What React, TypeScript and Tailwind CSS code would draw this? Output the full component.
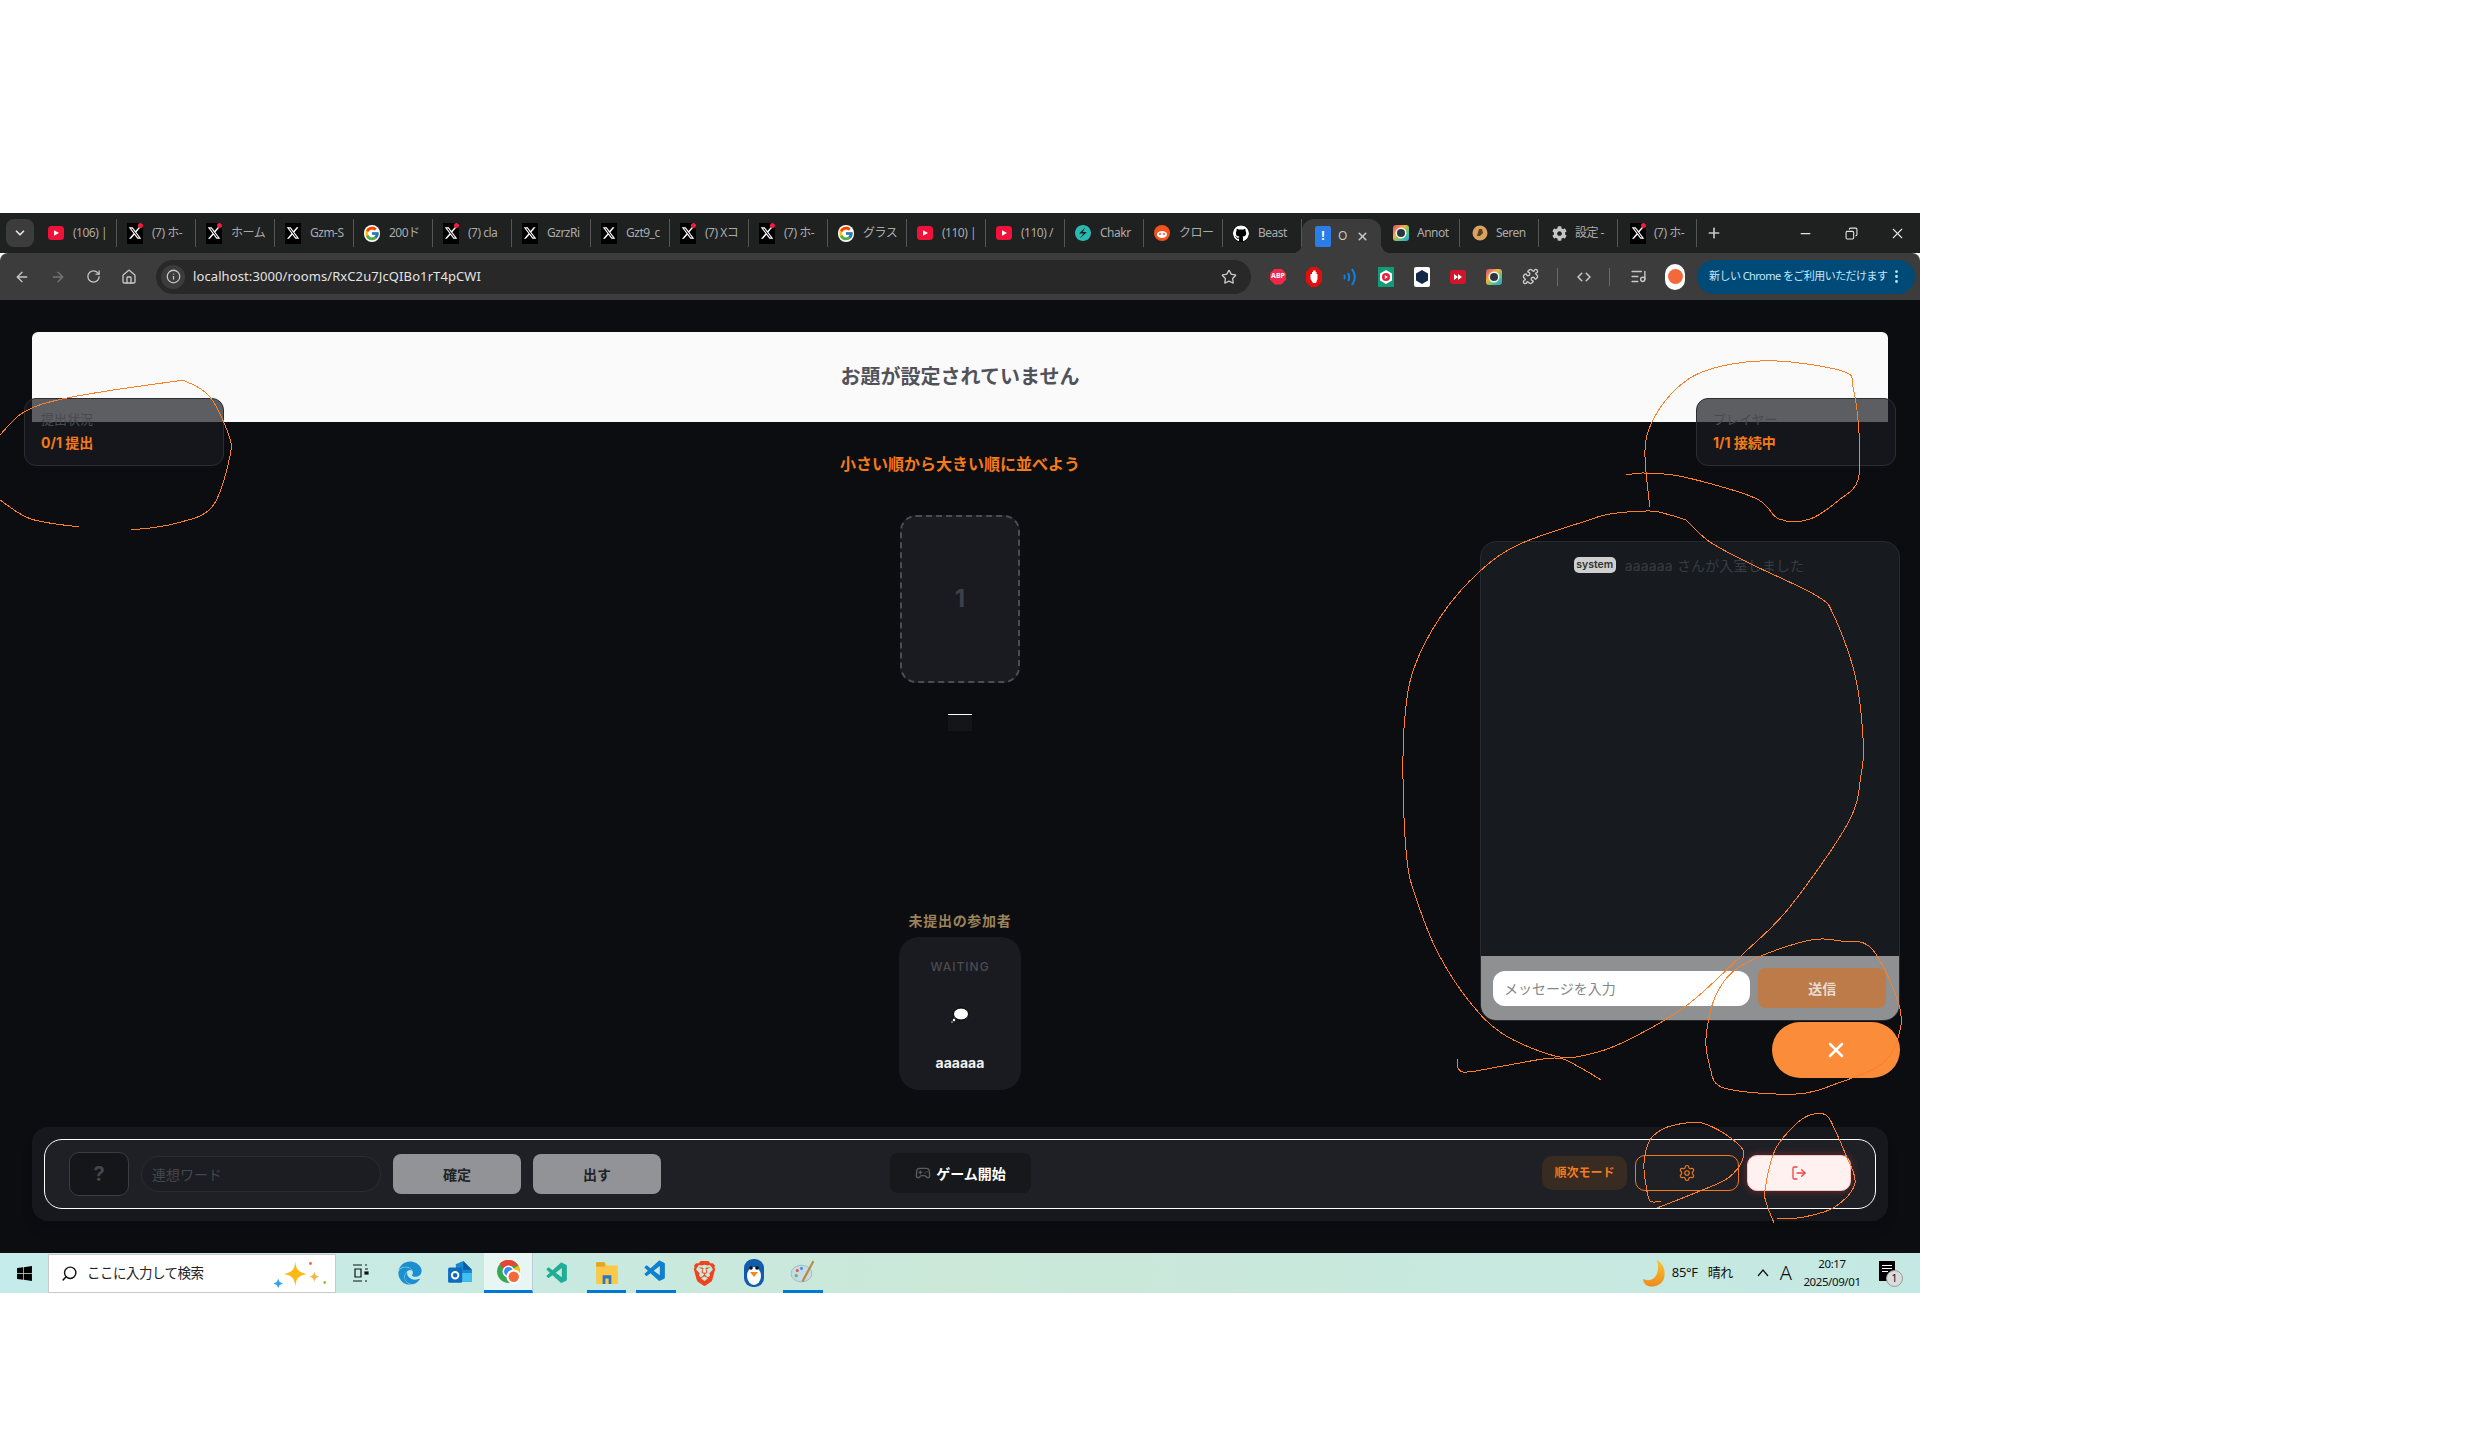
import { ArrowLeft, ArrowRight, ChevronDown, ChevronsLeftRight, Copy, EllipsisVertical, Gamepad2, Home, Info, ListMusic, LogOut, Minus, Plus, Puzzle, RotateCw, Search, Settings, Star, X } from "lucide-react"
import { FaCog, FaEdge, FaGithub, FaWindows } from "react-icons/fa"
import { FaXTwitter } from "react-icons/fa6"
import { FcGoogle } from "react-icons/fc"
import { SiBrave, SiChakraui } from "react-icons/si"
import { VscVscode } from "react-icons/vsc"

const uiFont = "font-['Noto_Sans','Noto_Sans_CJK_JP',sans-serif]"

type Pt = [number, number]

// freehand marks drawn over the screenshot
const strokes: Pt[][] = [
  [[0, 500], [31, 519], [79, 527]],
  [[131, 530], [173, 524], [212, 507], [230, 456], [228, 433], [210, 397], [187, 382], [170, 382], [67, 398], [24, 412], [0, 435]],
  [[1626, 475], [1644, 473], [1684, 477], [1755, 498], [1779, 519], [1810, 519], [1839, 500], [1858, 480], [1859, 433], [1853, 387], [1845, 372], [1791, 362], [1746, 362], [1702, 372], [1675, 390], [1653, 420], [1645, 450], [1649, 500], [1650, 507]],
  [[1686, 520], [1670, 515], [1650, 511], [1610, 514], [1589, 520], [1520, 544], [1479, 572], [1441, 616], [1414, 668], [1405, 716], [1403, 779], [1407, 860], [1417, 901], [1438, 953], [1469, 1001], [1503, 1034], [1555, 1056], [1586, 1055], [1624, 1042], [1686, 1006], [1744, 953], [1789, 908], [1848, 823], [1861, 775], [1863, 738], [1855, 675], [1834, 616], [1817, 596], [1751, 564], [1710, 542], [1686, 520]],
  [[1457, 1059], [1463, 1072], [1503, 1066], [1555, 1058], [1579, 1067], [1601, 1080]],
  [[1710, 1068], [1706, 1038], [1717, 993], [1744, 964], [1806, 941], [1841, 941], [1872, 949], [1899, 1005], [1898, 1038], [1882, 1064], [1841, 1082], [1796, 1094], [1724, 1088], [1710, 1068]],
  [[1661, 1201], [1650, 1201], [1646, 1185], [1644, 1163], [1650, 1140], [1665, 1128], [1686, 1123], [1702, 1123], [1725, 1134], [1743, 1150], [1740, 1165], [1725, 1180], [1690, 1195], [1657, 1208]],
  [[1774, 1223], [1767, 1205], [1765, 1190], [1775, 1150], [1795, 1125], [1810, 1115], [1826, 1115], [1835, 1130], [1845, 1153], [1855, 1183], [1835, 1207], [1804, 1217], [1777, 1219]],
]

function toPath(p: Pt[]) {
  let d = `M${p[0][0]} ${p[0][1]}`
  for (let i = 0; i < p.length - 1; i++) {
    const a = p[Math.max(i - 1, 0)]
    const b = p[i]
    const c = p[i + 1]
    const e = p[Math.min(i + 2, p.length - 1)]
    d += ` C${b[0] + (c[0] - a[0]) / 6} ${b[1] + (c[1] - a[1]) / 6} ${c[0] - (e[0] - b[0]) / 6} ${c[1] - (e[1] - b[1]) / 6} ${c[0]} ${c[1]}`
  }
  return d
}

function Youtube() {
  return (
    <svg viewBox="0 0 16 16" className="size-4">
      <rect x="0" y="1" width="16" height="14" rx="3.5" fill="#f0123a" />
      <path d="M6 5.2 11 8l-5 2.8z" fill="#fff" />
    </svg>
  )
}

function XIcon({ dot = true }: { dot?: boolean }) {
  return (
    <span className="relative flex h-[21px] w-[16px] items-center justify-center bg-black text-white">
      <FaXTwitter size={14} />
      {dot && <span className="absolute right-0 top-0 size-[5px] rounded-full bg-[#f01e3c]" />}
    </span>
  )
}

function Ring() {
  return (
    <svg viewBox="0 0 16 16" className="size-4">
      <defs>
        <linearGradient id="ring" x1="0" y1="0" x2="1" y2="1">
          <stop offset="0" stopColor="#e0407f" />
          <stop offset=".4" stopColor="#f2b33d" />
          <stop offset=".7" stopColor="#47c78a" />
          <stop offset="1" stopColor="#3b8ff0" />
        </linearGradient>
      </defs>
      <rect width="16" height="16" rx="3" fill="url(#ring)" />
      <circle cx="8" cy="8" r="5.5" fill="#f4f4f4" />
      <circle cx="8" cy="8" r="4" fill="#2c3440" />
    </svg>
  )
}

const tabs: { icon: React.ReactNode; label: string }[] = [
  { icon: <Youtube />, label: "(106) |" },
  { icon: <XIcon />, label: "(7) ホ-" },
  { icon: <XIcon />, label: "ホーム" },
  { icon: <XIcon dot={false} />, label: "Gzm-S" },
  { icon: <FcGoogle size={17} className="rounded-full bg-white" />, label: "200ド" },
  { icon: <XIcon />, label: "(7) cla" },
  { icon: <XIcon dot={false} />, label: "GzrzRi" },
  { icon: <XIcon dot={false} />, label: "Gzt9_c" },
  { icon: <XIcon />, label: "(7) Xコ" },
  { icon: <XIcon />, label: "(7) ホ-" },
  { icon: <FcGoogle size={17} className="rounded-full bg-white" />, label: "グラス" },
  { icon: <Youtube />, label: "(110) |" },
  { icon: <Youtube />, label: "(110) /" },
  { icon: <SiChakraui size={16} className="text-[#2bb8b0]" />, label: "Chakr" },
  {
    icon: (
      <svg viewBox="0 0 16 16" className="size-[18px]">
        <circle cx="8" cy="8" r="8" fill="#f4511e" />
        <ellipse cx="8" cy="9.5" rx="5" ry="3.4" fill="#fff" />
        <circle cx="6" cy="9" r="1" fill="#f4511e" />
        <circle cx="10" cy="9" r="1" fill="#f4511e" />
      </svg>
    ),
    label: "クロー",
  },
  { icon: <FaGithub size={17} className="rounded-full bg-black text-white" />, label: "Beast" },
]

const tabsAfter: { icon: React.ReactNode; label: string }[] = [
  { icon: <Ring />, label: "Annot" },
  {
    icon: (
      <svg viewBox="0 0 16 16" className="size-4">
        <circle cx="8" cy="8" r="7.5" fill="#d8a25f" />
        <path d="M5 11 7 4h3l1 4-3 3z" fill="#5e3f1f" />
      </svg>
    ),
    label: "Seren",
  },
  { icon: <FaCog size={15} className="text-[#c4c7c5]" />, label: "設定 -" },
  { icon: <XIcon />, label: "(7) ホ-" },
]

function Tab({ icon, label, after }: { icon: React.ReactNode; label: string; after?: boolean }) {
  return (
    <div className={after ? "flex h-[28px] w-[79px] shrink-0 items-center border-r border-[#555] pl-[12px]" : "flex h-[28px] w-[79px] shrink-0 items-center border-r border-[#555] pl-[10px]"}>
      <span className="flex w-[16px] shrink-0 justify-center">{icon}</span>
      <span className={after ? "ml-[8px] w-[41px] whitespace-nowrap text-[12px] tracking-[-0.5px] text-[#b9bbbb] opacity-90" : "ml-[9px] w-[41px] whitespace-nowrap text-[12px] tracking-[-0.5px] text-[#b9bbbb] opacity-90"}>{label}</span>
    </div>
  )
}

function TabStrip() {
  return (
    <div className="flex h-[40px] items-center bg-[#1f2121] pl-[6px]">
      <span className="flex h-[28px] w-[28px] items-center justify-center rounded-lg bg-[#3c3c3c] text-[#e3e3e3]">
        <ChevronDown size={14} strokeWidth={3} />
      </span>
      <div className="ml-[4px] flex items-center">
        {tabs.map((t, i) => <Tab key={i} {...t} />)}
      </div>
      <div className="relative flex h-[34px] w-[79px] shrink-0 items-center self-end rounded-t-xl bg-[#3c3c3c] pl-[13px]">
        <span className="absolute -left-[10px] bottom-0 size-[10px] bg-[radial-gradient(circle_at_0_0,transparent_10px,#3c3c3c_10.5px)]" />
        <span className="absolute -right-[10px] bottom-0 size-[10px] bg-[radial-gradient(circle_at_100%_0,transparent_10px,#3c3c3c_10.5px)]" />
        <span className="flex h-[21px] w-[16px] items-center justify-center rounded-[2px] bg-[#2b7de9] text-[12px] font-bold text-white">!</span>
        <span className="ml-[7px] text-[12px] text-[#c4c7c5]">O</span>
        <X size={13} strokeWidth={3} className="ml-[9px] text-[#c4c7c5]" />
      </div>
      <div className="flex items-center">
        {tabsAfter.map((t, i) => <Tab key={i} after {...t} />)}
      </div>
      <Plus size={16} strokeWidth={2.5} className="ml-[9px] text-[#c4c7c5]" />
      <div className="ml-auto flex w-[130px] items-center justify-between pl-[8px] pr-[14px] text-[#e3e3e3]">
        <Minus size={15} />
        <Copy size={13} className="-scale-x-100" />
        <X size={17} strokeWidth={1.5} />
      </div>
    </div>
  )
}

function Ext({ children }: { children: React.ReactNode }) {
  return <span className="flex w-[36px] shrink-0 justify-center">{children}</span>
}

function Toolbar() {
  return (
    <div className="flex h-[47px] items-center rounded-t-lg bg-[#3c3c3c] text-[#c7c7c7]">
      <div className="flex w-[156px] shrink-0 items-center gap-[20px] pl-[14px]">
        <ArrowLeft size={16} />
        <ArrowRight size={16} className="text-[#757575]" />
        <RotateCw size={15} />
        <Home size={16} />
      </div>
      <div className="flex h-[34px] w-[1095px] shrink-0 items-center rounded-full bg-[#282828] pl-[5px] pr-[14px]">
        <span className="flex size-[24px] items-center justify-center rounded-full bg-[#3c3c3c]">
          <Info size={15} />
        </span>
        <span className="ml-[8px] text-[13px] tracking-[0.1px] text-[#e3e3e3]">localhost:3000/rooms/RxC2u7JcQIBo1rT4pCWI</span>
        <Star size={16} className="ml-auto" />
      </div>
      <div className="ml-[9px] flex items-center">
        <Ext>
          <span className="flex size-[16px] items-center justify-center bg-[#f0284a] text-[7px] font-bold text-white [clip-path:polygon(30%_0,70%_0,100%_30%,100%_70%,70%_100%,30%_100%,0_70%,0_30%)]">ABP</span>
        </Ext>
        <Ext>
          <svg viewBox="0 0 16 20" className="h-[20px] w-[16px]">
            <path d="M5 0h6l5 5v10l-5 5H5l-5-5V5z" fill="#e30d0d" />
            <path d="M4.500 7v5l2.500 4h3l1.500-4V7h-1V5h-1V3.500H7V5H6v2z" fill="#fff" />
          </svg>
        </Ext>
        <Ext>
          <svg viewBox="0 0 16 20" className="h-[20px] w-[16px]" fill="none" stroke="#0a84e8" strokeWidth="2">
            <path d="M2 8c1 1 1 3 0 4M6 6c1.500 2 1.500 6 0 8M10 2c3.500 5 3.500 11 0 16" />
          </svg>
        </Ext>
        <Ext>
          <svg viewBox="0 0 16 20" className="h-[20px] w-[16px]">
            <rect width="16" height="20" fill="#0f9d78" />
            <path d="M8 3l6 3.500v7L8 17l-6-3.500v-7z" fill="#fff" />
            <circle cx="8" cy="10" r="4" fill="#e5213c" />
            <path d="M6.800 8 10 10l-3.200 2z" fill="#fff" />
          </svg>
        </Ext>
        <Ext>
          <svg viewBox="0 0 16 20" className="h-[20px] w-[16px]">
            <rect width="16" height="20" rx="2" fill="#fff" />
            <path d="M8 3l6 3.500v7L8 17l-6-3.500v-7z" fill="#12294a" />
          </svg>
        </Ext>
        <Ext>
          <svg viewBox="0 0 16 16" className="size-4">
            <rect y="1" width="16" height="14" rx="3" fill="#d2152c" />
            <path d="M4 5l4 3-4 3zM8 5l4 3-4 3z" fill="#fff" />
          </svg>
        </Ext>
        <Ext><Ring /></Ext>
        <Ext><Puzzle size={17} /></Ext>
        <span className="ml-[9px] h-[18px] w-px bg-[#6a6a6a]" />
        <span className="ml-[17px] w-[18px]"><ChevronsLeftRight size={18} /></span>
        <span className="ml-[16px] h-[18px] w-px bg-[#6a6a6a]" />
        <span className="ml-[20px]"><ListMusic size={17} /></span>
        <span className="ml-[18px] flex h-[26px] w-[20px] items-center justify-center rounded-full bg-white">
          <span className="size-[15px] rounded-full bg-[#f4693c]" />
        </span>
        <div className="ml-[12px] flex h-[34px] w-[218px] items-center rounded-full bg-[#004a77] pl-[12px] pr-[10px] text-[#c2e7ff]">
          <span className="whitespace-nowrap text-[11px] tracking-[-0.55px]">新しい Chrome をご利用いただけます</span>
          <EllipsisVertical size={17} className="ml-auto shrink-0" />
        </div>
      </div>
    </div>
  )
}

function StatCard({ label, value }: { label: string; value: string }) {
  return (
    <div className="flex h-[68px] w-[200px] flex-col rounded-xl border border-[#2a2d32] bg-[#181b20]/70 pl-[16px] pt-[12px]">
      <span className="text-[13px] leading-[16px] text-[#484a4e]">{label}</span>
      <span className="mt-[6px] text-[14px] font-bold leading-[20px] text-[#f47a1a]">{value}</span>
    </div>
  )
}

function ChatPanel() {
  return (
    <div className="flex h-[480px] flex-col overflow-hidden rounded-2xl border border-[#26292e] bg-[#171a1f]">
      <div className="flex flex-1 justify-center pt-[15px]">
        <div className="-ml-[2px] flex h-[16px] items-center">
          <span className="flex h-[16px] w-[42px] items-center justify-center rounded-[5px] bg-[#cfcfcf] text-[10.500px] font-semibold text-[#333]">system</span>
          <span className="ml-[9px] text-[14px] tracking-[0.15px] text-[#3a3c41]">aaaaaa さんが入室しました</span>
        </div>
      </div>
      <div className="flex h-[64px] items-center bg-[#8e9091] pl-[12px] pr-[13px]">
        <div className="flex h-[35px] w-[258px] items-center rounded-xl bg-white pl-[11px] text-[14px] text-[#85878a]">メッセージを入力</div>
        <button className="ml-[8px] h-[40px] w-[128px] rounded-lg bg-[#bc7b48] text-[14px] font-bold text-[#e6dcd2]">送信</button>
      </div>
    </div>
  )
}

function BottomBar() {
  return (
    <div className="mt-auto h-[94px] rounded-2xl bg-[#16181d] px-[12px] py-[12px] shadow-lg">
      <div className="flex h-[70px] items-center rounded-[18px] border border-white bg-[#1e2025] pl-[24px] pr-[24px]">
        <span className="flex h-[44px] w-[60px] items-center justify-center rounded-[10px] border border-[#3b3d42] bg-[#14161a] text-[20px] font-bold text-[#44464b]">?</span>
        <div className="ml-[12px] flex h-[36px] w-[240px] items-center rounded-full border border-[#2a2c31] bg-[#1b1d22] pl-[10px] text-[14px] text-[#44464a]">連想ワード</div>
        <button className="ml-[12px] h-[40px] w-[128px] rounded-lg bg-[#929397] text-[14px] font-bold text-[#222327]">確定</button>
        <button className="ml-[12px] h-[40px] w-[128px] rounded-lg bg-[#929397] text-[14px] font-bold text-[#222327]">出す</button>
        <button className="mb-[2px] ml-[229px] flex h-[40px] w-[141px] items-center justify-center gap-[5px] rounded-lg bg-[#17181b] text-[14px] font-bold text-white">
          <Gamepad2 size={16} className="text-[#5a5c60]" />
          ゲーム開始
        </button>
        <span className="mb-[2px] ml-auto flex h-[34px] w-[85px] items-center justify-center rounded-[10px] bg-[#382b22] text-[12px] font-bold text-[#f47a1a]">順次モード</span>
        <span className="mb-[2px] ml-[8px] flex h-[36px] w-[104px] items-center justify-center rounded-[10px] border border-[#f47a1a] text-[#f47a1a]">
          <Settings size={18} strokeWidth={1.500} />
        </span>
        <span className="mb-[2px] ml-[8px] flex h-[36px] w-[104px] items-center justify-center rounded-[10px] border border-[#f9c0c0] bg-[#fff1f0] text-[#ef4444] shadow-[0_0_8px_rgba(239,68,68,0.4)]">
          <LogOut size={16} />
        </span>
      </div>
    </div>
  )
}

function Taskbar() {
  return (
    <div className="flex h-[40px] items-center bg-gradient-to-r from-[#c5ecea] via-[#cbe8d8] to-[#c4e9e4] text-[#111]">
      <span className="flex w-[48px] shrink-0 justify-center"><FaWindows size={17} className="text-black" /></span>
      <div className="flex h-[39px] w-[288px] shrink-0 items-center border border-[#c9c9c9] bg-white pl-[12px]">
        <Search size={17} className="-scale-x-100" />
        <span className="ml-[9px] text-[13.500px] tracking-[-0.5px] text-[#222]">ここに入力して検索</span>
        <svg viewBox="0 0 60 40" className="ml-auto mr-[4px] h-[38px] w-[60px]">
          <path d="M24 8c1 9 3 11 12 13-9 2-11 4-12 13-1-9-3-11-12-13 9-2 11-4 12-13z" fill="#fdb913" />
          <path d="M44 18c.5 4 1.500 5 5 6-3.500 1-4.500 2-5 6-.5-4-1.500-5-5-6 3.500-1 4.500-2 5-6z" fill="#fbb040" />
          <circle cx="40" cy="10" r="1.500" fill="#f0673a" />
          <circle cx="55" cy="30" r="1.500" fill="#8cc63f" />
          <path d="M6 26l1.500 3.500L11 31l-3.500 1.500L6 36l-1.500-3.500L1 31l3.500-1.500z" fill="#2ba6e8" />
        </svg>
      </div>
      <span className="flex w-[49px] shrink-0 justify-center">
        <svg viewBox="0 0 18 18" className="size-[18px]" fill="none" stroke="#111" strokeWidth="1.200">
          <path d="M1 1h9M1 17h9M3 5h6v8H3zM13 1h2M13 5h3M13 17h2" />
          <rect x="13" y="8" width="3" height="2" fill="#111" />
        </svg>
      </span>
      <span className="flex w-[50px] shrink-0 justify-center"><FaEdge size={24} className="text-[#1b8fd2]" /></span>
      <span className="flex w-[49px] shrink-0 justify-center">
        <svg viewBox="0 0 24 24" className="size-[26px]">
          <path d="M8 4l7-3 8 8v11H10z" fill="#1a86d0" />
          <path d="M15 1l8 8h-8z" fill="#0a5fa8" />
          <path d="M12 12h11v8H12z" fill="#40c0f0" />
          <rect x="1" y="7" width="13" height="14" rx="1.500" fill="#0f6cbd" />
          <circle cx="7.500" cy="14" r="3" fill="none" stroke="#fff" strokeWidth="1.800" />
        </svg>
      </span>
      <span className="flex h-[40px] w-[49px] shrink-0 items-center justify-center border-b-[3px] border-r border-b-[#0078d4] border-r-[#bcd] bg-[#e8f6f3]">
        <svg viewBox="0 0 24 24" className="size-[25px]">
          <circle cx="12" cy="12" r="11" fill="#34a853" />
          <path d="M12 1a11 11 0 0 1 9.500 5.500H12a5.500 5.500 0 0 0-5 3L3.500 4.500A11 11 0 0 1 12 1z" fill="#ea4335" />
          <path d="M21.500 6.500A11 11 0 0 1 12 23l4.800-8.200A5.500 5.500 0 0 0 16.800 9z" fill="#fbbc05" />
          <circle cx="12" cy="12" r="5" fill="#4285f4" stroke="#fff" strokeWidth="1.500" />
          <circle cx="17" cy="17" r="7" fill="#fff" />
          <circle cx="17" cy="17" r="5" fill="#f4693c" />
        </svg>
      </span>
      <span className="flex w-[49px] shrink-0 justify-center"><VscVscode size={25} className="text-[#1fae95]" /></span>
      <span className="flex h-[40px] w-[49px] shrink-0 items-center justify-center">
        <span className="flex h-[40px] w-[39px] items-center justify-center border-b-[3px] border-[#0078d4]">
          <svg viewBox="0 0 24 24" className="size-[26px]">
            <path d="M2 3h8l2 3h10v17H2z" fill="#fbc94a" />
            <path d="M2 3h8v4H2z" fill="#e0a526" />
            <path d="M8 15h8v8h-2.500v-5h-3v5H8z" fill="#2878c8" />
          </svg>
        </span>
      </span>
      <span className="flex h-[40px] w-[49px] shrink-0 items-center justify-center">
        <span className="flex h-[40px] w-[40px] items-center justify-center border-b-[3px] border-[#0078d4]">
          <VscVscode size={25} className="text-[#0f7fd0]" />
        </span>
      </span>
      <span className="flex w-[49px] shrink-0 justify-center"><SiBrave size={25} className="text-[#f0421c]" /></span>
      <span className="flex w-[49px] shrink-0 justify-center">
        <svg viewBox="0 0 20 28" className="h-[28px] w-[20px]">
          <rect width="20" height="28" rx="9" fill="#0f5cad" />
          <ellipse cx="10" cy="17" rx="7" ry="9" fill="#fff" />
          <circle cx="7" cy="9" r="1.800" fill="#111" />
          <circle cx="13" cy="9" r="1.800" fill="#111" />
          <path d="M6 13h8l-4 5z" fill="#f08a1d" />
        </svg>
      </span>
      <span className="flex h-[40px] w-[49px] shrink-0 items-center justify-center">
        <span className="flex h-[40px] w-[40px] items-center justify-center border-b-[3px] border-[#0078d4]">
          <svg viewBox="0 0 24 24" className="size-[25px]">
            <ellipse cx="11" cy="14" rx="10" ry="8" fill="#c6dbe6" stroke="#8aa" strokeWidth=".6" />
            <circle cx="7" cy="11" r="1.500" fill="#e8574c" />
            <circle cx="11" cy="9" r="1.500" fill="#3c9be0" />
            <circle cx="6" cy="16" r="1.500" fill="#5cb85c" />
            <path d="M22 1 11 21l2 1L23 3z" fill="#b88a3c" />
          </svg>
        </span>
      </span>
      <div className="ml-auto flex items-center pr-[25px] text-[13px]">
        <svg viewBox="0 0 22 26" className="h-[27px] w-[23px]">
          <defs>
            <linearGradient id="moon" x1="0" y1="0" x2="0" y2="1">
              <stop offset="0" stopColor="#f7c531" />
              <stop offset="1" stopColor="#ef8a1e" />
            </linearGradient>
          </defs>
          <path d="M13 0c7 3 9 12 7 18-2 6-10 9-15 7C2 24 0 21 0 18c5 3 11 1 13-4 2-5 2-10 0-14z" fill="url(#moon)" />
        </svg>
        <span className="ml-[6px] tracking-[-0.3px]">85°F</span>
        <span className="ml-[10px] tracking-[-0.5px]">晴れ</span>
        <svg viewBox="0 0 12 8" className="ml-[24px] h-[8px] w-[12px]" fill="none" stroke="#111" strokeWidth="1.200">
          <path d="M1 7l5-6 5 6" />
        </svg>
        <span className="ml-[11px] text-[20px] font-light leading-none">A</span>
        <div className="ml-[11px] flex w-[58px] flex-col items-center text-[11.500px] leading-[18px] tracking-[-0.4px]">
          <span>20:17</span>
          <span>2025/09/01</span>
        </div>
        <span className="relative ml-[18px] flex h-[24px] w-[16px] items-start">
          <span className="flex h-[20px] w-[16px] flex-col gap-[2px] bg-black px-[3px] pt-[4px]">
            <span className="h-px w-full bg-white" />
            <span className="h-px w-full bg-white" />
            <span className="h-px w-[6px] bg-white" />
          </span>
          <span className="absolute -bottom-[2px] -right-[8px] flex size-[17px] items-center justify-center rounded-full border border-[#999] bg-[#d8dcdc] text-[11px]">1</span>
        </span>
      </div>
    </div>
  )
}

export default function App() {
  return (
    <div className="relative h-[1450px] w-[2468px] overflow-hidden bg-white pt-[213px]">
      <div className="w-[1920px]">
        <div className={uiFont}>
          <TabStrip />
          <Toolbar />
        </div>
        <main className="relative flex h-[953px] flex-col bg-[#0b0d11] px-[32px] pb-[32px] pt-[32px] font-['Inter','Noto_Sans_CJK_JP',sans-serif]">
          <div className="flex h-[90px] shrink-0 items-center justify-center rounded-t-md bg-[#fafafa] text-[20px] font-bold text-[#52525b]">
            お題が設定されていません
          </div>
          <div className="absolute left-[24px] top-[98px]">
            <StatCard label="提出状況" value="0/1 提出" />
          </div>
          <div className="absolute left-[1696px] top-[98px]">
            <StatCard label="プレイヤー" value="1/1 接続中" />
          </div>

          <div className="flex flex-col items-center">
            <p className="mt-[30px] text-[16px] font-bold leading-[24px] text-[#f47a1a]">小さい順から大きい順に並べよう</p>
            <div className="mt-[39px] flex h-[168px] w-[120px] items-center justify-center rounded-2xl border-2 border-dashed border-[#4b4d52] bg-[#1a1b20] text-[24px] font-bold text-[#3f4046]">
              1
            </div>
            <span className="mt-[31px] h-[17px] w-[24px] border-t border-white bg-[#141518]" />
            <p className="mt-[180px] text-[14px] font-bold leading-[20px] tracking-[0.7px] text-[#9c8258]">未提出の参加者</p>
            <div className="mt-[6px] flex h-[153px] w-[122px] flex-col items-center rounded-[20px] bg-[#1a1b20]">
              <span className="mt-[22px] text-[12px] font-medium leading-[16px] tracking-[1px] text-[#4a4b50]">WAITING</span>
              <svg viewBox="0 0 18 16" className="mt-[32px] h-[16px] w-[18px]">
                <ellipse cx="10" cy="7" rx="7.500" ry="6" fill="#fff" stroke="#000" />
                <circle cx="3" cy="13" r="1.200" fill="#fff" />
                <circle cx="1" cy="15" r=".7" fill="#fff" />
              </svg>
              <span className="mt-[30px] text-[14px] font-bold leading-[20px] text-[#f1f1f1]">aaaaaa</span>
            </div>
          </div>

          <BottomBar />

          <div className="absolute right-[20px] top-[241px] flex w-[420px] flex-col">
            <ChatPanel />
            <button className="mt-[1px] flex h-[56px] w-[128px] items-center justify-center self-end rounded-full bg-[#fb8c3a] text-white">
              <X size={24} strokeWidth={2.500} />
            </button>
          </div>
        </main>
        <div className={uiFont}>
          <Taskbar />
        </div>
      </div>

      <svg className="pointer-events-none absolute left-0 top-0 h-[1450px] w-[2468px]" viewBox="0 0 2468 1450" fill="none" stroke="#ff7f27" strokeWidth="1" shapeRendering="crispEdges">
        {strokes.map((s, i) => <path key={i} d={toPath(s)} />)}
      </svg>
    </div>
  )
}
